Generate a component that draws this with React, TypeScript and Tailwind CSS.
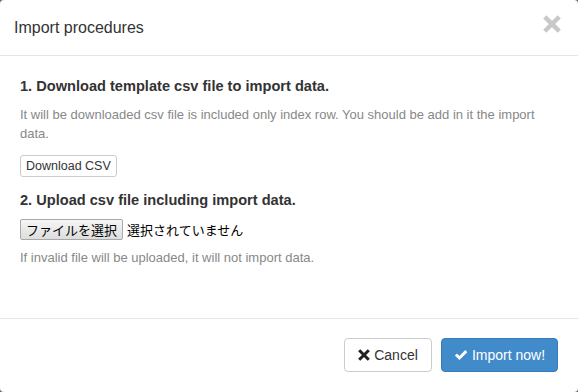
import React from "react";

function XIcon({ className, stroke }: { className?: string; stroke: number }) {
  return (
    <svg viewBox="0 0 16 16" className={className} fill="none" stroke="currentColor" strokeWidth={stroke} strokeLinecap="square">
      <path d="M3 3 L13 13 M13 3 L3 13" />
    </svg>
  );
}

function CheckIcon({ className }: { className?: string }) {
  return (
    <svg viewBox="0 0 16 16" className={className} fill="currentColor">
      <path d="M1 8.6 L3.4 6.2 L6.2 9 L12.8 2.4 L15.2 4.8 L6.2 13.8 Z" />
    </svg>
  );
}

export default function App() {
  return (
    <div className="w-[578px] h-[392px] bg-[#6b6b6b]" style={{ fontFamily: '"Liberation Sans", Arial, sans-serif' }}>
      <div className="w-full h-full bg-white rounded-[4px] flex flex-col overflow-hidden">
        <div className="h-[56px] border-b border-[#e5e5e5] flex items-center justify-between pl-[14px] pr-[17px] shrink-0">
          <h3 className="text-[16px] text-[#333] leading-none">Import procedures</h3>
          <XIcon className="w-[18px] h-[18px] text-[#c8c8c8] mb-[7px]" stroke={4} />
        </div>
        <div className="flex-1 px-5 pt-5">
          <h4 className="text-[14.6px] font-bold text-[#333] leading-[21px]">1. Download template csv file to import data.</h4>
          <p className="mt-[9px] text-[13px] leading-[18.5px] text-[#888]">
            It will be downloaded csv file is included only index row. You should be add in it the import data.
          </p>
          <div className="mt-[10px]">
            <button className="h-[22px] px-[5px] border border-[#ccc] rounded-[3px] bg-white text-[12.5px] text-[#333] leading-none">
              Download CSV
            </button>
          </div>
          <h4 className="mt-[13px] text-[14.6px] font-bold text-[#333] leading-[21px]">2. Upload csv file including import data.</h4>
          <div className="mt-[8px] flex items-center h-[21px]">
            <span
              className="h-[21px] px-[5px] flex items-center border border-[#a9a9a9] rounded-[2px] bg-gradient-to-b from-[#f6f6f6] to-[#dddddd] text-[13px] text-black"
              style={{ fontFamily: '"Noto Sans CJK JP", sans-serif' }}
            >
              ファイルを選択
            </span>
            <span className="ml-[4px] text-[13px] text-black" style={{ fontFamily: '"Noto Sans CJK JP", sans-serif' }}>
              選択されていません
            </span>
          </div>
          <p className="mt-[9px] text-[13px] leading-[17px] text-[#888]">
            If invalid file will be uploaded, it will not import data.
          </p>
        </div>
        <div className="h-[74px] border-t border-[#e5e5e5] flex items-start justify-end gap-[9px] pt-[19px] pr-[20px] shrink-0">
          <button className="w-[88px] h-[34px] border border-[#ccc] rounded-[4px] bg-white text-[#333] text-[14px] flex items-center justify-center gap-[4px]">
            <XIcon className="w-[12px] h-[12px] text-[#222]" stroke={4} />
            Cancel
          </button>
          <button className="w-[117px] h-[34px] rounded-[4px] bg-[#428bca] border border-[#357ebd] text-white text-[14px] flex items-center justify-center gap-[4px]">
            <CheckIcon className="w-[14px] h-[14px]" />
            Import now!
          </button>
        </div>
      </div>
    </div>
  );
}
